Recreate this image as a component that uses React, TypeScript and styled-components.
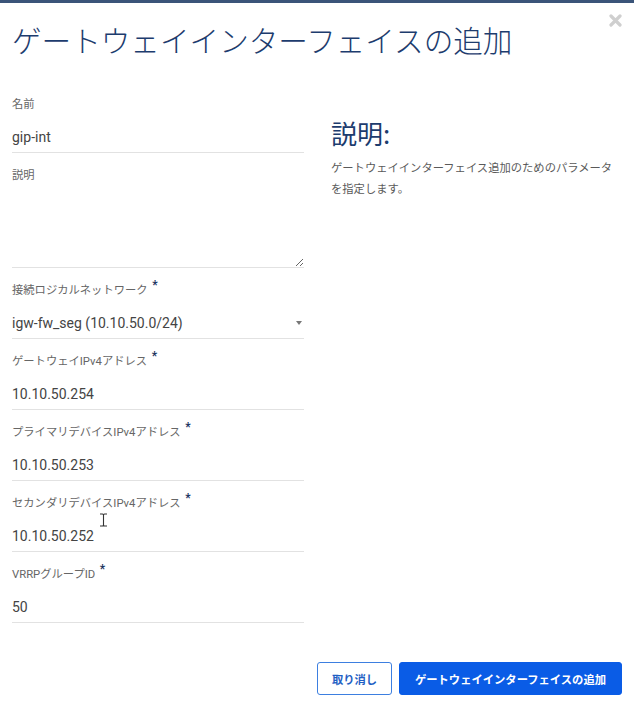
import styled, { createGlobalStyle } from 'styled-components';

const GlobalStyle = createGlobalStyle`
  html, body {
    margin: 0;
    padding: 0;
    background: #fff;
  }
  body {
    font-family: Roboto, "Noto Sans CJK JP", sans-serif;
  }
`;

const fields = [
  { label: '接続ロジカルネットワーク', value: 'igw-fw_seg (10.10.50.0/24)', select: true },
  { label: 'ゲートウェイIPv4アドレス', value: '10.10.50.254' },
  { label: 'プライマリデバイスIPv4アドレス', value: '10.10.50.253' },
  { label: 'セカンダリデバイスIPv4アドレス', value: '10.10.50.252' },
  { label: 'VRRPグループID', value: '50' },
];

const App = () => {
  return (
    <>
      <GlobalStyle />
      <Dialog>
        <TopBar />
        <Header>
          <Title>ゲートウェイインターフェイスの追加</Title>
          <Close aria-label="close">
            <svg width="13" height="13" viewBox="0 0 13 13">
              <path d="M2 2 L11 11 M11 2 L2 11" stroke="#cfcfcf" strokeWidth="3.2" strokeLinecap="round" />
            </svg>
          </Close>
        </Header>
        <Body>
          <Form>
            <Field>
              <Label>名前</Label>
              <Input defaultValue="gip-int" />
            </Field>
            <Field>
              <Label>説明</Label>
              <TextArea />
            </Field>
            {fields.map((f) => (
              <Field key={f.label}>
                <Label>
                  {f.label}
                  <Required>*</Required>
                </Label>
                {f.select ? (
                  <Select>
                    <span>{f.value}</span>
                    <Caret />
                  </Select>
                ) : (
                  <Input defaultValue={f.value} />
                )}
              </Field>
            ))}
          </Form>
          <Help>
            <HelpTitle>説明:</HelpTitle>
            <HelpText>
              ゲートウェイインターフェイス追加のためのパラメータを指定します。
            </HelpText>
          </Help>
        </Body>
        <Footer>
          <CancelBtn>取り消し</CancelBtn>
          <SubmitBtn>ゲートウェイインターフェイスの追加</SubmitBtn>
        </Footer>
        <Cursor>
          <svg width="9" height="14" viewBox="0 0 9 14">
            <path d="M1 1 H3.5 Q4.5 1 4.5 2 V12 Q4.5 13 3.5 13 H1 M8 1 H5.5 Q4.5 1 4.5 2 M4.5 12 Q4.5 13 5.5 13 H8" fill="none" stroke="#333" strokeWidth="1.1" />
          </svg>
        </Cursor>
      </Dialog>
    </>
  );
};

const Dialog = styled.div`
  position: relative;
  width: 634px;
  height: 706px;
  background: #fff;
  box-sizing: border-box;
`;

const TopBar = styled.div`
  height: 3px;
  background: #3b5479;
`;

const Header = styled.div`
  display: flex;
  justify-content: space-between;
  align-items: flex-start;
  padding: 0 12px;
`;

const Title = styled.h1`
  margin: 17px 0 0;
  font-family: "Noto Sans CJK JP", sans-serif;
  font-size: 29.6px;
  font-weight: 300;
  line-height: 40px;
  color: #1d3c6e;
`;

const Close = styled.div`
  margin-top: 11px;
  margin-right: 0;
  line-height: 0;
`;

const Body = styled.div`
  display: grid;
  grid-template-columns: 292px 1fr;
  column-gap: 27px;
  padding: 37px 12px 0;
`;

const Form = styled.div`
  display: flex;
  flex-direction: column;
  gap: 15px;
`;

const Field = styled.div`
  display: flex;
  flex-direction: column;
  gap: 8px;
`;

const Label = styled.div`
  position: relative;
  align-self: flex-start;
  font-family: Roboto, "Noto Sans CJK JP", sans-serif;
  font-size: 11.3px;
  line-height: 16px;
  color: #666;
`;

const Required = styled.span`
  position: absolute;
  top: -6px;
  right: -10px;
  font-size: 12px;
  font-weight: 700;
  color: #1d3560;
`;

const Input = styled.input`
  display: block;
  width: 100%;
  height: 32px;
  box-sizing: border-box;
  padding: 0;
  margin: 0;
  border: none;
  border-bottom: 1px solid #e2e2e2;
  outline: none;
  background: transparent;
  font-family: Roboto, "Noto Sans CJK JP", sans-serif;
  font-size: 14px;
  color: #444;
`;

const TextArea = styled.textarea`
  display: block;
  width: 100%;
  height: 76px;
  box-sizing: border-box;
  padding: 0;
  margin: 0;
  border: none;
  border-bottom: 1px solid #e2e2e2;
  outline: none;
  resize: vertical;
  background: transparent;
  font-family: Roboto, "Noto Sans CJK JP", sans-serif;
  font-size: 14px;
  color: #444;
`;

const Select = styled.div`
  display: flex;
  align-items: center;
  justify-content: space-between;
  height: 32px;
  box-sizing: border-box;
  padding-right: 2px;
  border-bottom: 1px solid #e2e2e2;
  font-family: Roboto, "Noto Sans CJK JP", sans-serif;
  font-size: 14px;
  color: #444;
`;

const Caret = styled.span`
  width: 0;
  height: 0;
  border-left: 3.5px solid transparent;
  border-right: 3.5px solid transparent;
  border-top: 4px solid #777;
`;

const Help = styled.div`
  padding-top: 20px;
`;

const HelpTitle = styled.h2`
  margin: 0 0 8px;
  font-family: "Noto Sans CJK JP", sans-serif;
  font-size: 26px;
  font-weight: 400;
  line-height: 32px;
  color: #1d3c6e;
`;

const HelpText = styled.p`
  margin: 0;
  font-family: "Noto Sans CJK JP", sans-serif;
  font-size: 11.3px;
  line-height: 21px;
  color: #5a5a5a;
`;

const Footer = styled.div`
  display: flex;
  justify-content: flex-end;
  gap: 7px;
  padding: 39px 12px 0;
`;

const BaseBtn = styled.button`
  height: 33px;
  box-sizing: border-box;
  border-radius: 3px;
  font-family: "Noto Sans CJK JP", sans-serif;
  font-size: 11.3px;
  font-weight: 700;
  cursor: pointer;
`;

const CancelBtn = styled(BaseBtn)`
  width: 75px;
  background: #fff;
  border: 1px solid #3d7fe0;
  color: #1f5fc4;
`;

const SubmitBtn = styled(BaseBtn)`
  width: 223px;
  background: #0a5ce6;
  border: 1px solid #0a5ce6;
  color: #fff;
`;

const Cursor = styled.div`
  position: absolute;
  left: 99px;
  top: 513px;
  line-height: 0;
  pointer-events: none;
`;

export default App;
